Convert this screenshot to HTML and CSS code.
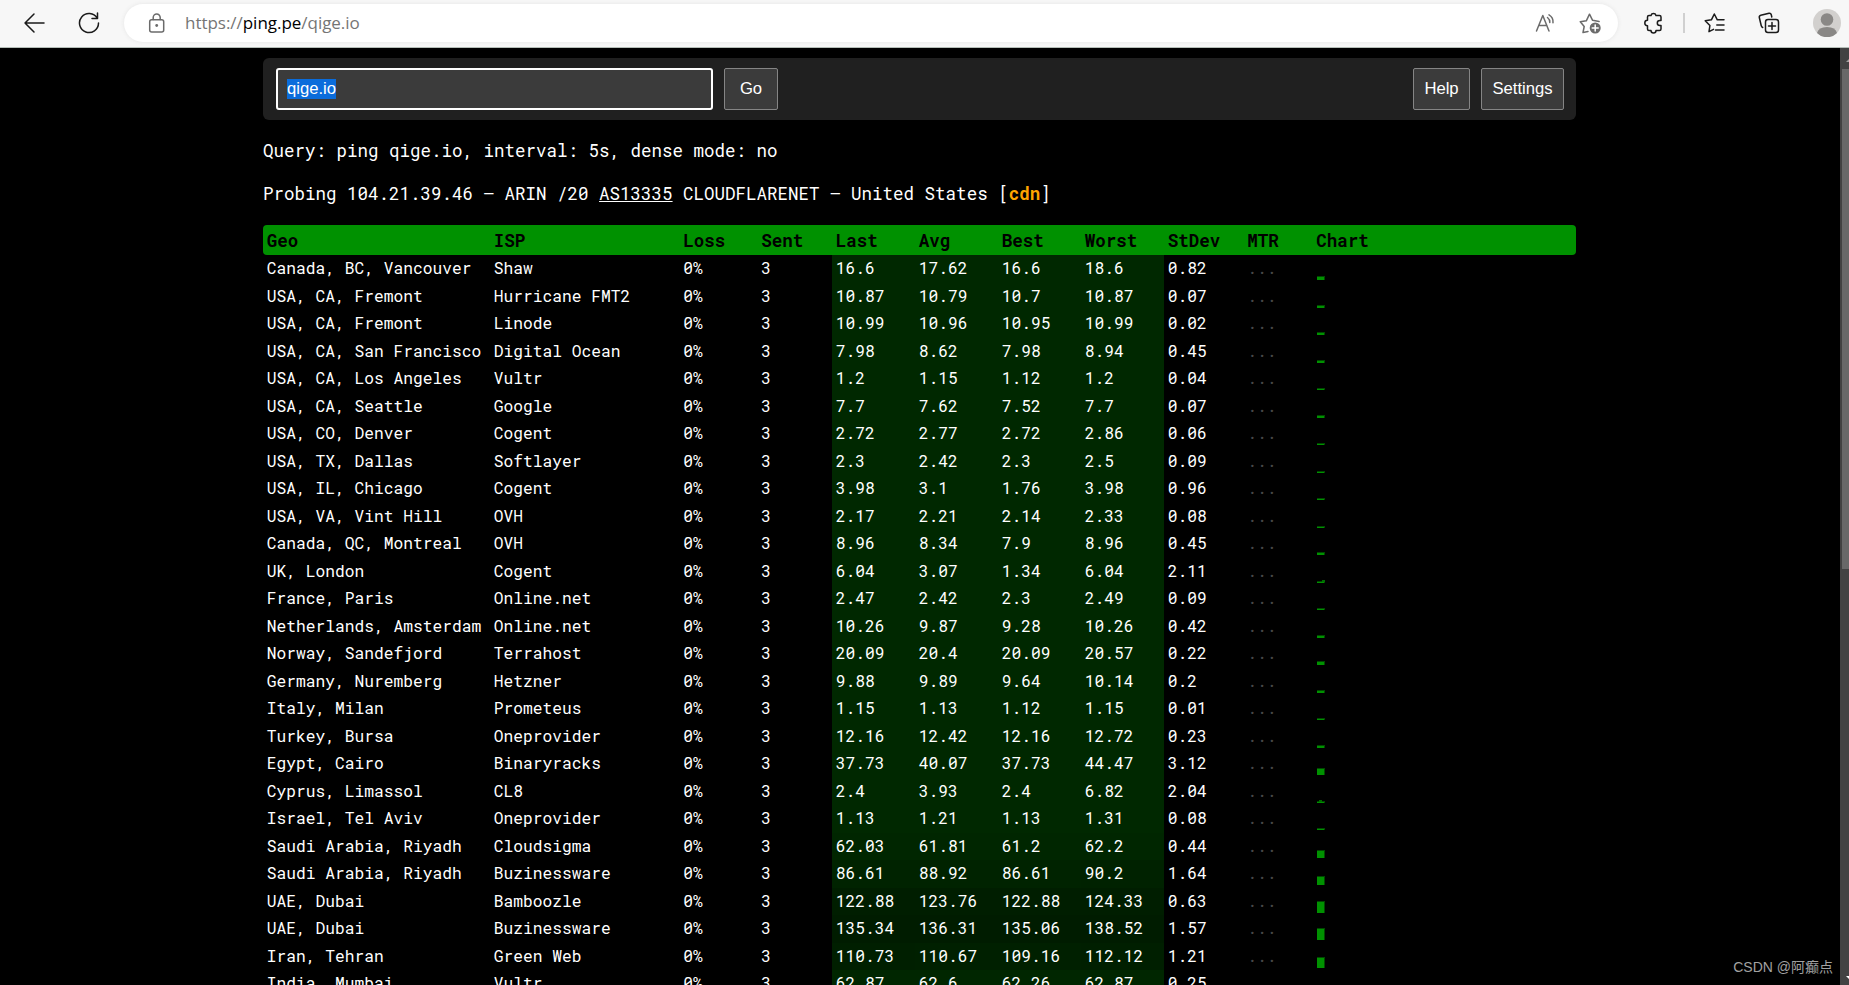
FILE: index.html
```html
<!DOCTYPE html>
<html lang="en">
<head>
    <meta charset="UTF-8">
    <title>ping qige.io</title>
    <link rel="stylesheet" href="styles.css">
</head>
<body>
<header class="browser-bar">
    <svg class="icon back" width="22" height="22" viewBox="0 0 22 22"><path d="M21 11H2M11 2L2 11l9 9"/></svg>
    <svg class="icon reload" width="22" height="22" viewBox="0 0 22 22"><path d="M19.2 6.2A9.5 9.5 0 1 0 20.5 11M19.5 1v5.500h-5.500"/></svg>
    <div class="address">
        <svg class="icon lock" width="18" height="20" viewBox="0 0 18 20"><rect x="1.700" y="6.700" width="14" height="12.300" rx="2"/><path d="M5.200 6.500V4.500a3.500 3.500 0 0 1 7 0v2"/><circle class="dot" cx="8.700" cy="12.500" r="1.400"/></svg>
        <span class="url">https://<b>ping.pe</b>/qige.io</span>
        <svg class="icon read" width="22" height="20" viewBox="0 0 22 20"><path d="M1.500 18L7.800 2.500 14 18M3.700 12.500h8.200M12.500 4.500q2.500 2 2.300 5M14 1.800q4.500 2.700 4 7.900"/></svg>
        <svg class="icon fav" width="23" height="22" viewBox="0 0 23 22"><path d="M9 19.500l-5 1 1.200-6L1.300 9.700l6-.9L10.500 2.200l3.100 6.100 6.500 1.200"/><circle class="dot" cx="16.200" cy="16" r="5.500"/><path class="plus" d="M16.200 13v6M13.200 16h6"/></svg>
    </div>
    <svg class="icon puzzle" width="20" height="22" viewBox="0 0 20 22"><path d="M7 3.500a2.600 2.600 0 0 1 5 0h3.500q1.500 0 1.500 1.500v3.500h-1.200a2.500 2.500 0 0 0 0 5H17V17q0 1.500-1.500 1.500H12a2.500 2.500 0 0 1-5 0H5q-1.500 0-1.500-1.500v-3.300a2.700 2.700 0 0 1 0-5.400V5Q3.500 3.500 5 3.500z"/></svg>
    <i class="separator"></i>
    <svg class="icon favorites" width="22" height="22" viewBox="0 0 22 22"><path d="M9.500 17.300L5 19.700l.9-6.200L1.200 8.700l6.200-.9L10.300 2l3 5.800H20M12.800 13H20M11.500 18H20"/></svg>
    <svg class="icon collections" width="22" height="22" viewBox="0 0 22 22"><rect x="7.500" y="7.500" width="13" height="13" rx="2.500"/><path d="M14 10.500v7M10.500 14h7M4.700 15.500Q3.500 15 3.200 13.500L1.300 5.500Q1 3.700 2.800 3.200L11 1.300Q12.800 1 13.300 2.800L13.800 5"/></svg>
    <svg class="avatar" width="28" height="28" viewBox="0 0 28 28"><circle cx="14" cy="14" r="14" fill="#d2d0ce"/><circle cx="14" cy="10.500" r="6.300" fill="#8a8886"/><path d="M4 24q1.500-6 10-6t10 6a14 14 0 0 1-20 0z" fill="#8a8886"/></svg>
</header>
<div class="viewport">
    <main class="page">
        <form class="search" onsubmit="return false">
            <div class="query-box"><span class="selected">qige.io</span></div>
            <button class="go">Go</button>
            <button class="help">Help</button>
            <button>Settings</button>
        </form>
        <p class="info">Query: ping qige.io, interval: 5s, dense mode: no</p>
        <p class="info">Probing 104.21.39.46 — ARIN /20 <a>AS13335</a> CLOUDFLARENET — United States [<b class="cdn">cdn</b>]</p>
        <table class="results">
            <thead>
            <tr><th>Geo</th><th>ISP</th><th>Loss</th><th>Sent</th><th>Last</th><th>Avg</th><th>Best</th><th>Worst</th><th>StDev</th><th>MTR</th><th>Chart</th></tr>
            </thead>
            <tbody id="rows"></tbody>
        </table>
    </main>
    <div class="scrollbar"><i class="up"></i><i class="thumb"></i><i class="down"></i></div>
    <div class="watermark">CSDN @阿癫点</div>
</div>
<script src="script.js"></script>
</body>
</html>
```
FILE: styles.css
```css
* {
    box-sizing: border-box;
}

body {
    margin: 0;
    height: 985px;
    overflow: hidden;
    background: #000;
    color: #fff;
    font-family: "Roboto Mono", "DejaVu Sans Mono", monospace;
}

/* browser toolbar */
.browser-bar {
    display: flex;
    align-items: center;
    height: 48px;
    padding: 0 8px 2px 23px;
    background: #f7f7f7;
    border-bottom: 1px solid #b5beb8;
}

.icon {
    flex: none;
    fill: none;
    stroke: #1b1b1b;
    stroke-width: 1.5;
    stroke-linecap: round;
    stroke-linejoin: round;
}

.reload {
    margin-left: 33px;
}

.address {
    display: flex;
    align-items: center;
    width: 1494px;
    height: 38px;
    margin-left: 24px;
    padding: 0 16px 0 24px;
    border-radius: 19px;
    background: #fff;
    box-shadow: 0 0 4px #e4e4e4;
}

.address .icon {
    stroke: #6b6b6b;
}

.icon .dot {
    fill: #6b6b6b;
    stroke: none;
}

.icon .plus {
    stroke: #fff;
}

.url {
    margin-left: 19px;
    color: #757575;
    font: 17px/24px "Segoe UI", "Open Sans", sans-serif;
    letter-spacing: -0.03px;
}

.url b {
    color: #000;
    font-weight: normal;
}

.read {
    margin-left: auto;
}

.fav {
    margin-left: 22px;
}

.puzzle {
    margin-left: 26px;
}

.separator {
    width: 2px;
    height: 20px;
    margin-left: 19px;
    background: #d0d0d0;
}

.favorites {
    margin-left: 19px;
}

.collections {
    margin-left: 32px;
}

.avatar {
    flex: none;
    margin-left: auto;
}

.viewport {
    position: relative;
    display: flex;
    justify-content: space-between;
    height: 937px;
    overflow: hidden;
}

.page {
    width: 1313px;
    margin-left: 263px;
    padding-top: 10px;
}

/* search bar */
.search {
    display: flex;
    height: 62px;
    margin-bottom: 21px;
    padding: 10px 12px 10px 13px;
    border-radius: 6px;
    background: #202020;
    font: 16.67px "Liberation Sans", Arial, sans-serif;
}

.query-box {
    display: flex;
    align-items: center;
    width: 437px;
    padding: 0 9px 1px;
    border: 2px solid #fff;
    border-radius: 3px;
    background: #3b3b3b;
}

.selected {
    line-height: 20px;
    background: #0a6cdb;
}

button {
    height: 42px;
    margin-left: 11px;
    padding: 0 10.4px;
    border: 1px solid #858585;
    border-radius: 2px;
    background: #3b3b3b;
    color: #fff;
    font: inherit;
}

.go {
    width: 54px;
}

.help {
    margin-left: auto;
}

.info {
    margin: 0 0 23px;
    font-size: 17.5px;
    line-height: 20px;
    white-space: pre;
}

.info a {
    text-decoration: underline;
}

.cdn {
    color: #ffa500;
}

/* results */
.results {
    display: block;
    margin-top: -2px;
    font-size: 16.25px;
    line-height: 26px;
}

thead, tbody {
    display: block;
}

tr {
    display: grid;
    grid-template-columns: 227px 189.5px 78px 74.5px repeat(4, 83px) 79.5px 69px 1fr;
    height: 27.5px;
}

thead tr {
    height: 30px;
    border-radius: 4px;
    background: #009100;
    color: #000;
    font-size: 17.5px;
    line-height: 31px;
}

td, th {
    padding: 0 3.75px;
    text-align: left;
    white-space: nowrap;
}

.mtr {
    color: #484848;
}

.chart {
    display: flex;
    align-items: flex-end;
    padding: 0 0 2.5px 4.500px;
}

.bar {
    position: relative;
    width: 8px;
    border-top: 1px solid #004800;
    border-right: 1px solid #004800;
    background: #009100;
}

/* one slow reply sticks out above the rest */
.rise::before, .peak::before {
    content: "";
    position: absolute;
    top: -2px;
    left: 5px;
    width: 3px;
    height: 2px;
    background: #006c00;
}

.peak::before {
    left: 2px;
}

.scrollbar {
    display: flex;
    flex-direction: column;
    width: 9px;
    padding-left: 2px;
    background: #424242;
}

.thumb {
    height: 500px;
    background: #686868;
}

.up, .down {
    height: 21px;
    overflow: hidden;
}

.up::before, .down::before {
    content: "";
    display: block;
    margin: 10px 0 0 4px;
    border: 4px solid transparent;
    border-top: 0;
    border-bottom-color: #a0a0a0;
}

.down {
    margin-top: auto;
}

.down::before {
    margin: 12px 0 0 4px;
    border-top: 4px solid #fff;
    border-bottom: 0;
}

.watermark {
    position: absolute;
    right: 16px;
    bottom: 7px;
    color: #a2a2a2;
    font: 14px/22px "Liberation Sans", "Noto Sans CJK SC", sans-serif;
}
```
FILE: script.js
```js
// geo, isp, last, avg, best, worst, stdev, bar height, bar shape
const hosts = [
    ['Canada, BC, Vancouver', 'Shaw', 16.6, 17.62, 16.6, 18.6, 0.82, 4],
    ['USA, CA, Fremont', 'Hurricane FMT2', 10.87, 10.79, 10.7, 10.87, 0.07, 3],
    ['USA, CA, Fremont', 'Linode', 10.99, 10.96, 10.95, 10.99, 0.02, 3],
    ['USA, CA, San Francisco', 'Digital Ocean', 7.98, 8.62, 7.98, 8.94, 0.45, 3],
    ['USA, CA, Los Angeles', 'Vultr', 1.2, 1.15, 1.12, 1.2, 0.04, 2],
    ['USA, CA, Seattle', 'Google', 7.7, 7.62, 7.52, 7.7, 0.07, 3],
    ['USA, CO, Denver', 'Cogent', 2.72, 2.77, 2.72, 2.86, 0.06, 2],
    ['USA, TX, Dallas', 'Softlayer', 2.3, 2.42, 2.3, 2.5, 0.09, 2],
    ['USA, IL, Chicago', 'Cogent', 3.98, 3.1, 1.76, 3.98, 0.96, 2],
    ['USA, VA, Vint Hill', 'OVH', 2.17, 2.21, 2.14, 2.33, 0.08, 2],
    ['Canada, QC, Montreal', 'OVH', 8.96, 8.34, 7.9, 8.96, 0.45, 3],
    ['UK, London', 'Cogent', 6.04, 3.07, 1.34, 6.04, 2.11, 2, 'rise'],
    ['France, Paris', 'Online.net', 2.47, 2.42, 2.3, 2.49, 0.09, 2],
    ['Netherlands, Amsterdam', 'Online.net', 10.26, 9.87, 9.28, 10.26, 0.42, 3],
    ['Norway, Sandefjord', 'Terrahost', 20.09, 20.4, 20.09, 20.57, 0.22, 4],
    ['Germany, Nuremberg', 'Hetzner', 9.88, 9.89, 9.64, 10.14, 0.2, 3],
    ['Italy, Milan', 'Prometeus', 1.15, 1.13, 1.12, 1.15, 0.01, 2],
    ['Turkey, Bursa', 'Oneprovider', 12.16, 12.42, 12.16, 12.72, 0.23, 3],
    ['Egypt, Cairo', 'Binaryracks', 37.73, 40.07, 37.73, 44.47, 3.12, 7],
    ['Cyprus, Limassol', 'CL8', 2.4, 3.93, 2.4, 6.82, 2.04, 2, 'peak'],
    ['Israel, Tel Aviv', 'Oneprovider', 1.13, 1.21, 1.13, 1.31, 0.08, 2],
    ['Saudi Arabia, Riyadh', 'Cloudsigma', 62.03, 61.81, 61.2, 62.2, 0.44, 8],
    ['Saudi Arabia, Riyadh', 'Buzinessware', 86.61, 88.92, 86.61, 90.2, 1.64, 9],
    ['UAE, Dubai', 'Bamboozle', 122.88, 123.76, 122.88, 124.33, 0.63, 12],
    ['UAE, Dubai', 'Buzinessware', 135.34, 136.31, 135.06, 138.52, 1.57, 12],
    ['Iran, Tehran', 'Green Web', 110.73, 110.67, 109.16, 112.12, 1.21, 11],
    ['India, Mumbai', 'Vultr', 62.87, 62.6, 62.26, 62.87, 0.25, 8],
];

// the slower the reply, the darker the green
function cell(ms) {
    const green = Math.round(40 - Math.max(0, ms - 50) * 0.14);
    return `<td style="background:rgb(0,${green},0)">${ms}</td>`;
}

document.getElementById('rows').innerHTML = hosts.map(([geo, isp, last, avg, best, worst, dev, height, shape = '']) => `
    <tr><td>${geo}</td><td>${isp}</td><td>0%</td><td>3</td>
    ${[last, avg, best, worst].map(cell).join('')}
    <td>${dev}</td><td class="mtr">...</td>
    <td class="chart"><i class="bar ${shape}" style="height:${height}px"></i></td></tr>`).join('');
```
